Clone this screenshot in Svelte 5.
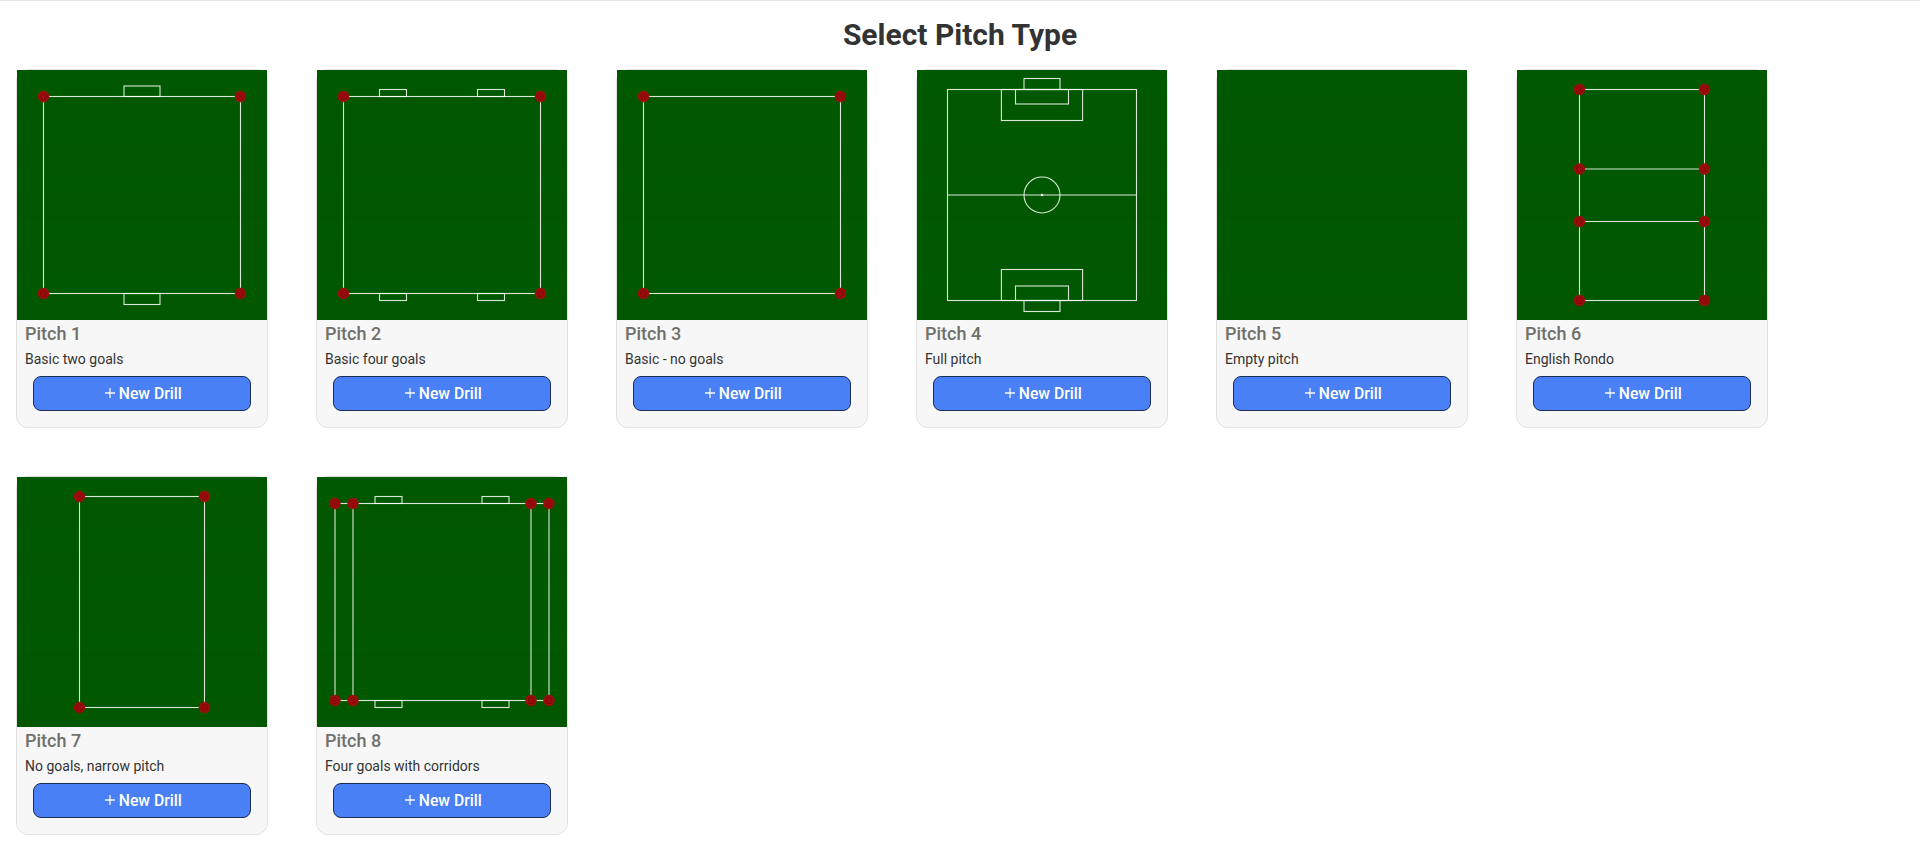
<script>
  // all coordinates are in the 250x250 pitch image
  const dots = (xs, ys) => xs.flatMap((x) => ys.map((y) => [x, y]));

  const box = [[26.5, 26.5, 197, 197]];

  const pitches = [
    {
      name: 'Pitch 1',
      desc: 'Basic two goals',
      rects: [...box, [107, 16, 36, 10.5], [107, 223.5, 36, 11]],
      dots: dots([26.5, 223.5], [26.5, 223.5])
    },
    {
      name: 'Pitch 2',
      desc: 'Basic four goals',
      rects: [...box, [62.5, 19.5, 27, 7], [160.5, 19.5, 27, 7], [62.5, 223.5, 27, 7], [160.5, 223.5, 27, 7]],
      dots: dots([26.5, 223.5], [26.5, 223.5])
    },
    {
      name: 'Pitch 3',
      desc: 'Basic - no goals',
      rects: box,
      dots: dots([26.5, 223.5], [26.5, 223.5])
    },
    {
      name: 'Pitch 4',
      desc: 'Full pitch',
      rects: [
        [30.5, 19.5, 189, 211],
        [107, 8.5, 36, 11],
        [107, 230.5, 36, 11],
        [84.4, 19.5, 81.2, 31],
        [84.4, 199.5, 81.2, 31],
        [98.5, 19.5, 53, 14.5],
        [98.5, 216, 53, 14.5]
      ],
      lines: [[30.5, 125, 219.5, 125]],
      full: true,
      dots: []
    },
    { name: 'Pitch 5', desc: 'Empty pitch', rects: [], dots: [] },
    {
      name: 'Pitch 6',
      desc: 'English Rondo',
      rects: [[62.5, 19.5, 125, 211]],
      lines: [[62.5, 99, 187.5, 99], [62.5, 151.5, 187.5, 151.5]],
      dots: dots([62.5, 187.5], [19.5, 99, 151.5, 230.5])
    },
    {
      name: 'Pitch 7',
      desc: 'No goals, narrow pitch',
      rects: [[62.5, 19.5, 125, 211]],
      dots: dots([62.5, 187.5], [19.5, 230.5])
    },
    {
      name: 'Pitch 8',
      desc: 'Four goals with corridors',
      rects: [
        [18, 26.5, 214, 197],
        [58, 19.5, 27, 7],
        [165, 19.5, 27, 7],
        [58, 223.5, 27, 7],
        [165, 223.5, 27, 7]
      ],
      lines: [[36, 26.5, 36, 223.5], [214, 26.5, 214, 223.5]],
      dots: dots([18, 36, 214, 232], [26.5, 223.5])
    }
  ];
</script>

<div class="page">
  <h1>Select Pitch Type</h1>

  <div class="grid">
    {#each pitches as pitch}
      <div class="card">
        <svg class="pitch" viewBox="0 0 250 250" width="250" height="250">
          {#each pitch.rects as r}
            <rect x={r[0]} y={r[1]} width={r[2]} height={r[3]} class="line" />
          {/each}
          {#each pitch.lines ?? [] as l}
            <line x1={l[0]} y1={l[1]} x2={l[2]} y2={l[3]} class="line" />
          {/each}
          {#if pitch.full}
            <circle cx="125" cy="125" r="18" class="line" />
            <circle cx="125" cy="125" r="1.2" class="spot" />
          {/if}
          {#each pitch.dots as d}
            <circle cx={d[0]} cy={d[1]} r="5.7" class="cone" />
            <circle cx={d[0]} cy={d[1]} r="3.2" class="cone-ring" />
            <circle cx={d[0]} cy={d[1]} r="1" class="cone-top" />
          {/each}
        </svg>
        <div class="body">
          <h2>{pitch.name}</h2>
          <p>{pitch.desc}</p>
          <button type="button">
            <svg class="plus" viewBox="0 0 10 10" width="10" height="10">
              <path d="M5 0v10M0 5h10" />
            </svg>
            New Drill
          </button>
        </div>
      </div>
    {/each}
  </div>
</div>

<style>
  :global(body) {
    background: #fff;
  }

  .page {
    border-top: 1px solid #e5e5e5;
    font-family: Roboto, "Liberation Sans", sans-serif;
  }

  h1 {
    margin: 0;
    height: 68px;
    line-height: 68px;
    text-align: center;
    font-size: 30px;
    font-weight: 700;
    color: #333;
  }

  .grid {
    display: flex;
    flex-wrap: wrap;
    gap: 48px;
    padding: 0 16px;
  }

  .card {
    width: 252px;
    box-sizing: border-box;
    background: #f7f7f7;
    border: 1px solid #e2e2e2;
    border-radius: 12px;
  }

  .pitch {
    display: block;
    background: repeating-linear-gradient(#005900 0 25px, #005700 25px 50px);
  }

  .line {
    fill: none;
    stroke: #fff;
    stroke-opacity: 0.85;
    stroke-width: 1.1;
  }

  .spot {
    fill: #fff;
  }

  .cone {
    fill: #9c0e0e;
  }

  .cone-ring {
    fill: none;
    stroke: #820606;
    stroke-width: 1;
  }

  .cone-top {
    fill: #8a0606;
  }

  .body {
    padding: 0 8px 16px;
  }

  h2 {
    margin: 0;
    padding-top: 2px;
    font-size: 18px;
    line-height: 24px;
    font-weight: 500;
    color: #70706a;
  }

  p {
    margin: 0;
    padding-top: 4px;
    font-size: 14px;
    line-height: 18px;
    color: #333;
  }

  button {
    display: flex;
    align-items: center;
    justify-content: center;
    gap: 3.5px;
    width: 218px;
    height: 35px;
    margin: 8px 0 0 8px;
    padding: 0 0 1px 3px;
    box-sizing: border-box;
    background: #4a80f5;
    border: 1px solid #1b2c55;
    border-radius: 8px;
    color: #fff;
    font-family: inherit;
    font-size: 15.7px;
    font-weight: 500;
  }

  .plus path {
    fill: none;
    stroke: #fff;
    stroke-opacity: 0.95;
    stroke-width: 1.3;
  }
</style>
